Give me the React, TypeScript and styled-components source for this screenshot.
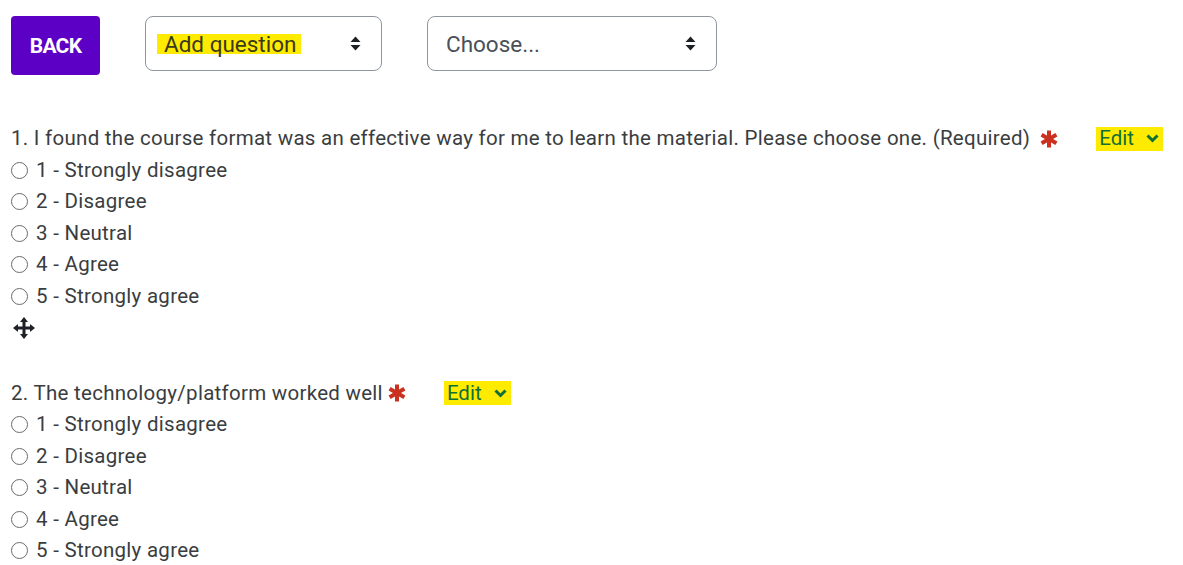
import React from "react";
import styled, { createGlobalStyle } from "styled-components";

const Global = createGlobalStyle`
  html, body { margin: 0; padding: 0; background: #fff; }
  body { font-family: Roboto, "Liberation Sans", sans-serif; color: #373a3c; }
`;

const Page = styled.div`
  padding: 16px 11px 0 11px;
`;

const Toolbar = styled.div`
  display: flex;
  align-items: flex-start;
`;

const BackButton = styled.button`
  width: 89px;
  height: 59px;
  background: #5b00c4;
  color: #fff;
  border: none;
  border-radius: 4px;
  font-family: Roboto, "Liberation Sans", sans-serif;
  font-weight: 700;
  font-size: 21px;
  letter-spacing: -0.7px;
  margin-right: 45px;
  padding: 0;
`;

const Select = styled.div<{ $w: number; $gap?: number }>`
  box-sizing: border-box;
  width: ${(p) => p.$w}px;
  height: 55px;
  border: 1px solid #8f959e;
  border-radius: 8px;
  display: flex;
  align-items: center;
  justify-content: space-between;
  padding: 0 20px 0 ${(p) => p.$gap ?? 11}px;
  margin-right: 45px;
  font-family: Roboto, "Liberation Sans", sans-serif;
  font-size: 22.5px;
  color: #495057;
`;

const Highlight = styled.span`
  background: #ffeb00;
  color: #3a3a1a;
  padding: 0 5px 0 7px;
  line-height: 20px;
  display: inline-block;
`;

const Questions = styled.div`
  margin-top: 48px;
  font-family: Roboto, "Liberation Sans", sans-serif;
  font-size: 20.5px;
  letter-spacing: 0.28px;
  line-height: 31.5px;
  color: #3a3d40;
`;

const Question = styled.div`
  & + & { margin-top: 34px; }
`;

const QTitle = styled.div`
  display: flex;
  align-items: center;
  white-space: nowrap;
`;

const Star = styled.span<{ $ml: number }>`
  display: inline-flex;
  margin-left: ${(p) => p.$ml}px;
  margin-right: 38px;
`;

const EditLink = styled.span`
  display: inline-flex;
  align-items: center;
  background: #ffeb00;
  color: #0e6f38;
  height: 24px;
  padding: 0 4px 0 3px;
  gap: 12px;
  letter-spacing: 0;
`;

const Option = styled.div`
  display: flex;
  align-items: center;
`;

const Radio = styled.span`
  box-sizing: border-box;
  width: 17px;
  height: 17px;
  border-radius: 50%;
  border: 1.3px solid #6a6a6a;
  margin-right: 8px;
  flex: none;
`;

const MoveRow = styled.div`
  height: 31.5px;
  display: flex;
  align-items: center;
  padding-left: 2px;
`;

const Arrows = () => (
  <svg width="11" height="15" viewBox="0 0 11 15">
    <path d="M5.5 0.5 L10.5 6 L0.5 6 Z" fill="#1d2125" />
    <path d="M5.5 14.5 L10.5 9 L0.5 9 Z" fill="#1d2125" />
  </svg>
);

const Asterisk = () => (
  <svg width="18" height="18" viewBox="0 0 18 18">
    <g stroke="#ca3120" strokeWidth="4" strokeLinecap="butt">
      <line x1="9" y1="0.5" x2="9" y2="17.5" />
      <line x1="1.6" y1="4.75" x2="16.4" y2="13.25" />
      <line x1="1.6" y1="13.25" x2="16.4" y2="4.75" />
    </g>
  </svg>
);

const Chevron = () => (
  <svg width="13" height="9" viewBox="0 0 13 9">
    <path d="M1.5 1.5 L6.5 6.5 L11.5 1.5" fill="none" stroke="#0e6f38" strokeWidth="3" />
  </svg>
);

const MoveIcon = () => (
  <svg width="22" height="22" viewBox="0 0 22 22">
    <g fill="#1d2125">
      <rect x="9.5" y="3" width="3" height="16" />
      <rect x="3" y="9.5" width="16" height="3" />
      <path d="M11 0 L15 5 L7 5 Z" />
      <path d="M11 22 L15 17 L7 17 Z" />
      <path d="M0 11 L5 7 L5 15 Z" />
      <path d="M22 11 L17 7 L17 15 Z" />
    </g>
  </svg>
);

const options = [
  "1 - Strongly disagree",
  "2 - Disagree",
  "3 - Neutral",
  "4 - Agree",
  "5 - Strongly agree",
];

export default function App() {
  return (
    <>
      <Global />
      <Page>
        <Toolbar>
          <BackButton>BACK</BackButton>
          <Select $w={237}>
            <Highlight>Add question</Highlight>
            <Arrows />
          </Select>
          <Select $w={290} $gap={18}>
            <span>Choose...</span>
            <Arrows />
          </Select>
        </Toolbar>
        <Questions>
          <Question>
            <QTitle>
              1. I found the course format was an effective way for me to learn the material. Please choose one. (Required)
              <Star $ml={10}><Asterisk /></Star>
              <EditLink>Edit <Chevron /></EditLink>
            </QTitle>
            {options.map((o) => (
              <Option key={o}><Radio />{o}</Option>
            ))}
            <MoveRow><MoveIcon /></MoveRow>
          </Question>
          <Question>
            <QTitle>
              2. The technology/platform worked well
              <Star $ml={5}><Asterisk /></Star>
              <EditLink>Edit <Chevron /></EditLink>
            </QTitle>
            {options.map((o) => (
              <Option key={o}><Radio />{o}</Option>
            ))}
          </Question>
        </Questions>
      </Page>
    </>
  );
}
